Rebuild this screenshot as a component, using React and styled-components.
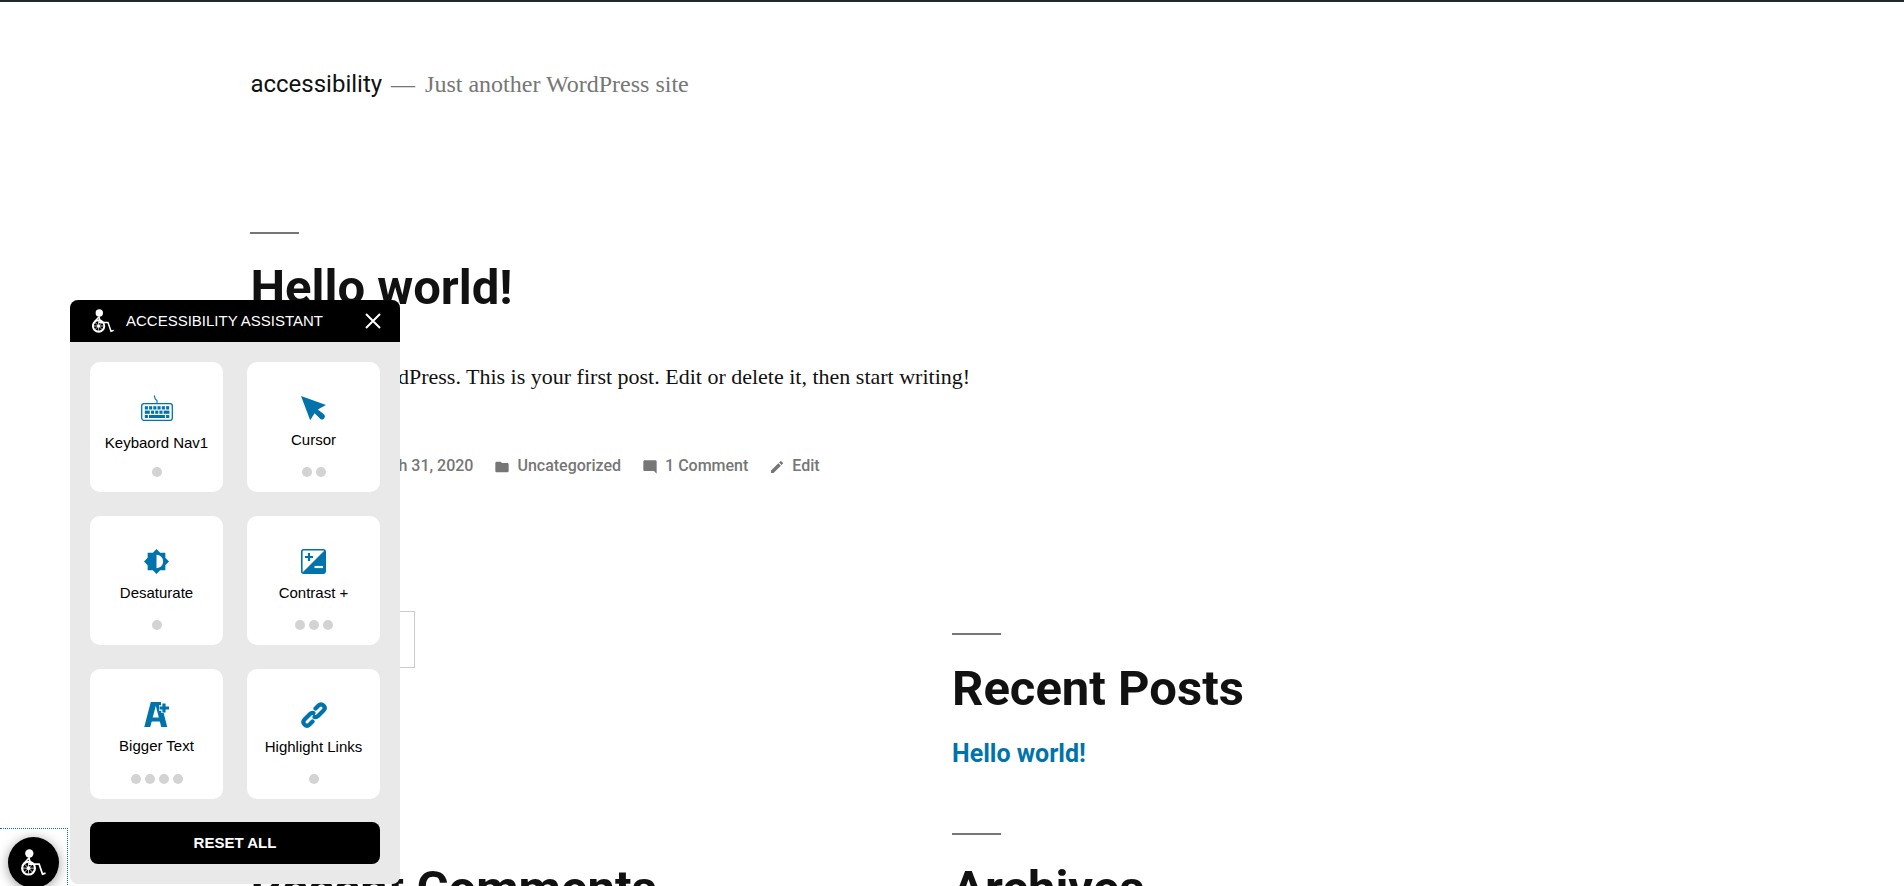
import React from "react";
import styled, { createGlobalStyle } from "styled-components";
import {
  MdPerson,
  MdWatchLater,
  MdFolder,
  MdModeComment,
  MdEdit,
} from "react-icons/md";

const sans = `Roboto, "Liberation Sans", sans-serif`;
const serif = `"Liberation Serif", serif`;
const ui = `"Liberation Sans", Arial, sans-serif`;

const GlobalStyle = createGlobalStyle`
  *, *::before, *::after { box-sizing: border-box; }
  body {
    margin: 0;
    background: #fff;
    color: #111;
    font-family: ${serif};
    font-size: 22px;
  }
`;

const Page = styled.div`
  padding: 0 calc(10% + 60px);
  border-top: 2px solid #23282d;
  overflow: hidden;
`;

const SiteHeader = styled.header`
  display: flex;
  align-items: baseline;
  gap: 9px;
  padding-top: 66px;
  line-height: 32px;
`;

const SiteTitle = styled.p`
  margin: 0;
  font-family: ${sans};
  font-size: 24px;
`;

const TitleLink = styled.a`
  color: #111;
  text-decoration: none;
`;

const SiteDescription = styled.p`
  display: flex;
  gap: 10px;
  margin: 0;
  font-size: 24px;
  color: #767676;
`;

const Article = styled.article`
  padding-top: 132px;
`;

const Heading = styled.h2`
  margin: 0;
  font-family: ${sans};
  font-size: 49px;
  font-weight: 700;
  line-height: 60px;

  &::before {
    content: "";
    display: block;
    width: 49px;
    height: 2px;
    margin-bottom: 24px;
    background: #767676;
  }
`;

const HeadingLink = styled.a`
  color: inherit;
  text-decoration: none;
`;

const Paragraph = styled.p`
  margin: 41px 0 0;
  line-height: 36px;
`;

const EntryMeta = styled.footer`
  display: flex;
  gap: 21px;
  margin-top: 59px;
  font-family: ${sans};
  font-size: 16px;
  font-weight: 500;
  line-height: 24px;
  color: #767676;
`;

const MetaLink = styled.a`
  display: flex;
  align-items: center;
  gap: 7px;
  color: inherit;
  text-decoration: none;

  svg {
    width: 16px;
    height: 16px;
    margin-top: 2px;
  }
`;

const Widgets = styled.aside`
  display: grid;
  grid-template-columns: 1fr 1fr;
  row-gap: 63px;
  padding-top: 133px;
`;

const Widget = styled.section`
  padding-top: ${(p) => (p.$inset ? "22px" : "0")};
`;

const SearchField = styled.input`
  display: block;
  width: 165px;
  height: 57px;
  padding: 8px;
  border: 1px solid #ccc;
  background: #fff;
  font: inherit;
`;

const PostLink = styled.a`
  display: block;
  margin-top: 19px;
  font-family: ${sans};
  font-size: 25px;
  font-weight: 700;
  line-height: 32px;
  color: #0073aa;
  text-decoration: none;
`;

const Panel = styled.section`
  position: fixed;
  left: 70px;
  bottom: 2px;
  width: 330px;
  border-radius: 8px;
  background: #e9e9e9;
  font-family: ${ui};
  font-size: 15px;
  color: #000;
  overflow: hidden;
`;

const PanelHeader = styled.header`
  display: flex;
  align-items: center;
  gap: 12px;
  height: 42px;
  padding: 0 19px 0 22px;
  background: #000;
  color: #fff;
`;

const PanelTitle = styled.h2`
  flex: 1;
  margin: 0;
  padding-bottom: 2px;
  font-size: 15px;
  font-weight: 400;
`;

const CloseButton = styled.button`
  display: flex;
  padding: 0 0 1px;
  border: 0;
  background: none;
  color: inherit;
`;

const PanelBody = styled.div`
  padding: 20px;
`;

const Tiles = styled.div`
  display: grid;
  grid-template-columns: 1fr 1fr;
  grid-auto-rows: 1fr;
  gap: 24px;
  height: 437px;
`;

const Tile = styled.button`
  display: flex;
  flex-direction: column;
  align-items: center;
  padding: 33px 0 15px;
  border: 0;
  border-radius: 10px;
  background: #fff;
  font: inherit;
  line-height: 18px;
  color: #000;

  svg {
    flex: none;
    margin-bottom: 10px;
    color: #0073aa;
  }
`;

const Dots = styled.span`
  display: flex;
  gap: 4px;
  margin-top: auto;
`;

const Dot = styled.span`
  width: 10px;
  height: 10px;
  border-radius: 50%;
  background: #d3d3d3;
`;

const ResetButton = styled.button`
  display: block;
  width: 100%;
  height: 42px;
  margin-top: 23px;
  padding: 0 0 2px;
  border: 0;
  border-radius: 8px;
  background: #000;
  color: #fff;
  font: inherit;
  font-weight: 700;
`;

const Launcher = styled.a`
  position: fixed;
  left: 0;
  bottom: -11px;
  padding: 8px;
  border: 1px dotted #0073aa;
  border-left: 0;
`;

const LauncherDisc = styled.span`
  display: flex;
  align-items: center;
  justify-content: center;
  width: 51px;
  height: 51px;
  border-radius: 50%;
  background: #000;
  box-shadow: 0 2px 12px rgba(0, 0, 0, 0.4);
  color: #fff;
`;

const WheelchairIcon = ({ width = 22, height = 24 }) => (
  <svg width={width} height={height} viewBox="0 0 22 24" fill="none" stroke="currentColor" aria-hidden="true">
    <circle cx="7.3" cy="4" r="3.7" fill="currentColor" stroke="none" />
    <circle cx="6.6" cy="17" r="5.7" strokeWidth="1.9" />
    <circle cx="6.6" cy="17" r="1.6" fill="currentColor" stroke="none" />
    <path d="M6.6 12v10M1.6 17h10M3 13.4l7.2 7.2M10.2 13.4L3 20.6" strokeWidth="0.7" />
    <path d="M7.4 7.5L2.6 12.6M7 8l1.5 5.3" strokeWidth="1.4" />
    <path d="M6.5 13.5H16L19 22.3L21.7 21.4" strokeWidth="1.5" />
  </svg>
);

const CloseIcon = () => (
  <svg width="16" height="16" viewBox="0 0 16 16" fill="none" stroke="currentColor" strokeWidth="2" aria-hidden="true">
    <path d="M1 1L15 15M15 1L1 15" />
  </svg>
);

const KeyboardIcon = () => (
  <svg width="32" height="29" viewBox="0 0 32 29" fill="currentColor" aria-hidden="true">
    <path d="M13.3 0.5L14.2 4L16 5.5V8" fill="none" stroke="currentColor" strokeWidth="1.1" />
    <rect x="0.7" y="8.7" width="30.6" height="16.6" rx="2.2" fill="none" stroke="currentColor" strokeWidth="1.3" />
    {[4, 8.3, 12.5, 16.7, 21, 25.3].map((x) => (
      <rect key={x} x={x - 0.2} y="11.2" width="3.1" height="3.3" />
    ))}
    <rect x="3.8" y="15.6" width="5" height="3.2" />
    {[10, 14.2, 18.4].map((x) => (
      <rect key={x} x={x} y="15.6" width="3.1" height="3.2" />
    ))}
    <rect x="22.6" y="15.6" width="5.8" height="3.2" />
    <rect x="3.8" y="20" width="3.1" height="3" />
    <rect x="8" y="20" width="15.9" height="3" />
    <rect x="25.1" y="20" width="3.2" height="3" />
  </svg>
);

const CursorIcon = () => (
  <svg width="25" height="26" viewBox="0 0 25 26" fill="currentColor" aria-hidden="true">
    <path d="M0 1L25 10L16.8 14.4L23.2 19.6A2.9 2.9 0 0 1 19.4 23.9L13.6 18.3L9.2 25.2Z" />
  </svg>
);

const DesaturateIcon = () => (
  <svg width="25" height="25" viewBox="0.7 0.7 22.6 22.6" fill="currentColor" aria-hidden="true">
    <path d="M20 15.31L23.31 12 20 8.69V4h-4.69L12 .69 8.69 4H4v4.69L.69 12 4 15.31V20h4.69L12 23.31 15.31 20H20v-4.69zM12 18V6c3.31 0 6 2.69 6 6s-2.69 6-6 6z" />
  </svg>
);

const ContrastIcon = () => (
  <svg width="25" height="25" viewBox="0 0 25 25" aria-hidden="true">
    <rect x="0.8" y="0.8" width="23.4" height="23.4" rx="2" fill="none" stroke="currentColor" strokeWidth="1.6" />
    <path d="M24 1V23Q24 24 23 24H1Z" fill="currentColor" />
    <path d="M4 8H12M8 4V12" stroke="currentColor" strokeWidth="2.2" />
    <path d="M13.5 18H22" stroke="#fff" strokeWidth="2.2" />
  </svg>
);

const BiggerTextIcon = () => (
  <svg width="25" height="25" viewBox="0 0 25 25" fill="none" stroke="currentColor" aria-hidden="true">
    <path d="M10.3 -2L3 26M13.3 -2L20.5 26" strokeWidth="5.8" />
    <path d="M6 17.5H18" strokeWidth="4" />
    <path d="M20 1V11M15 6H25" stroke="#fff" strokeWidth="5.4" />
    <path d="M20 1.5V10.5M15.5 6H25" strokeWidth="3.2" />
  </svg>
);

const LinksIcon = () => (
  <svg width="26" height="26" viewBox="0 0 26 26" fill="none" stroke="currentColor" strokeWidth="4.2" strokeLinecap="round" strokeLinejoin="round" aria-hidden="true">
    <path d="M14.5 6.5L17.5 3.5Q20 1 22.5 3.5T22.5 8.5L17 14Q15.5 15.5 13.5 15" />
    <path d="M11.5 19.5L8.5 22.5Q6 25 3.5 22.5T3.5 17.5L9 12Q10.5 10.5 12.5 11" />
  </svg>
);

const tiles = [
  { label: "Keybaord Nav1", levels: 1, Icon: KeyboardIcon },
  { label: "Cursor", levels: 2, Icon: CursorIcon },
  { label: "Desaturate", levels: 1, Icon: DesaturateIcon },
  { label: "Contrast +", levels: 3, Icon: ContrastIcon },
  { label: "Bigger Text", levels: 4, Icon: BiggerTextIcon },
  { label: "Highlight Links", levels: 1, Icon: LinksIcon },
];

const meta = [
  { label: "admin", Icon: MdPerson },
  { label: "March 31, 2020", Icon: MdWatchLater },
  { label: "Uncategorized", Icon: MdFolder },
  { label: "1 Comment", Icon: MdModeComment },
  { label: "Edit", Icon: MdEdit },
];

export default function App() {
  return (
    <>
      <GlobalStyle />
      <Page>
        <SiteHeader>
          <SiteTitle>
            <TitleLink href="#">accessibility</TitleLink>
          </SiteTitle>
          <SiteDescription>
            <span>—</span>
            <span>Just another WordPress site</span>
          </SiteDescription>
        </SiteHeader>
        <main>
          <Article>
            <Heading>
              <HeadingLink href="#">Hello world!</HeadingLink>
            </Heading>
            <Paragraph>
              Welcome to WordPress. This is your first post. Edit or delete it, then start writing!
            </Paragraph>
            <EntryMeta>
              {meta.map(({ label, Icon }) => (
                <MetaLink key={label} href="#">
                  <Icon aria-hidden="true" />
                  <span>{label}</span>
                </MetaLink>
              ))}
            </EntryMeta>
          </Article>
        </main>
        <Widgets>
          <Widget>
            <SearchField type="search" aria-label="Search" />
          </Widget>
          <Widget $inset>
            <Heading>Recent Posts</Heading>
            <PostLink href="#">Hello world!</PostLink>
          </Widget>
          <Widget>
            <Heading>Recent Comments</Heading>
          </Widget>
          <Widget>
            <Heading>Archives</Heading>
          </Widget>
        </Widgets>
      </Page>

      <Panel aria-label="Accessibility assistant">
        <PanelHeader>
          <WheelchairIcon />
          <PanelTitle>ACCESSIBILITY ASSISTANT</PanelTitle>
          <CloseButton type="button" aria-label="Close">
            <CloseIcon />
          </CloseButton>
        </PanelHeader>
        <PanelBody>
          <Tiles>
            {tiles.map(({ label, levels, Icon }) => (
              <Tile key={label} type="button">
                <Icon />
                {label}
                <Dots>
                  {Array.from({ length: levels }, (_, i) => (
                    <Dot key={i} />
                  ))}
                </Dots>
              </Tile>
            ))}
          </Tiles>
          <ResetButton type="button">RESET ALL</ResetButton>
        </PanelBody>
      </Panel>

      <Launcher href="#" aria-label="Open accessibility assistant">
        <LauncherDisc>
          <WheelchairIcon width={25} height={27} />
        </LauncherDisc>
      </Launcher>
    </>
  );
}
